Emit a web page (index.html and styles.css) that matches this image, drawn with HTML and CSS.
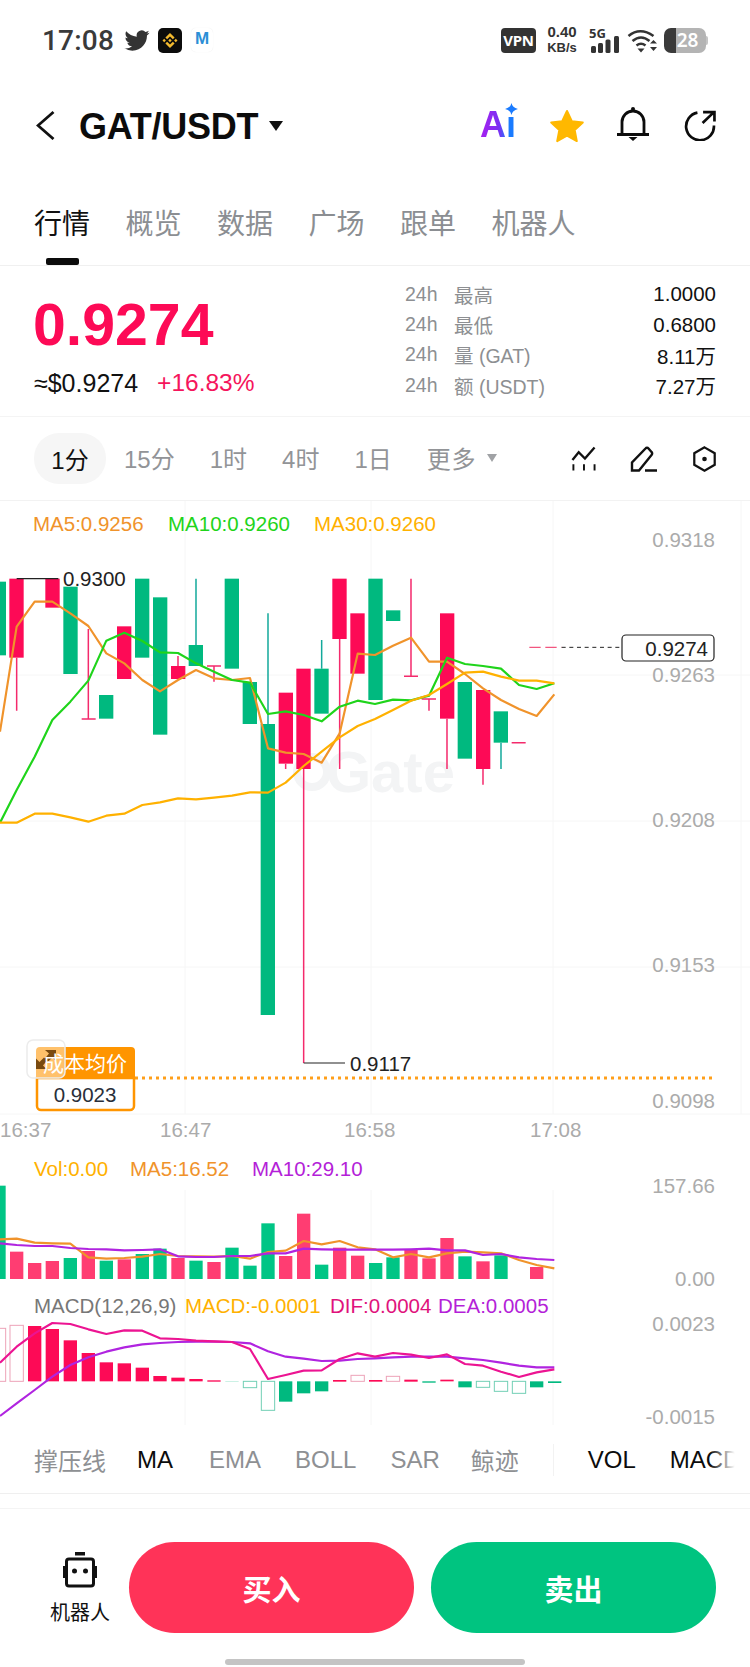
FILE: index.html
```html
<!DOCTYPE html>
<html lang="zh">
<head>
<meta charset="utf-8">
<title>GAT/USDT</title>
<link rel="stylesheet" href="styles.css">
</head>
<body>
<div class="page">
  <div class="status">
    <span class="clock">17:08</span>
    <svg class="st-bird" viewBox="0 0 24 24"><path d="M23.953 4.57a10 10 0 01-2.825.775 4.958 4.958 0 002.163-2.723c-.951.555-2.005.959-3.127 1.184a4.92 4.92 0 00-8.384 4.482C7.69 8.095 4.067 6.13 1.64 3.162a4.822 4.822 0 00-.666 2.475c0 1.71.87 3.213 2.188 4.096a4.904 4.904 0 01-2.228-.616v.06a4.923 4.923 0 003.946 4.827 4.996 4.996 0 01-2.212.085 4.936 4.936 0 004.604 3.417 9.867 9.867 0 01-6.102 2.105c-.39 0-.779-.023-1.17-.067a13.995 13.995 0 007.557 2.209c9.053 0 13.998-7.496 13.998-13.985 0-.21 0-.42-.015-.63A9.935 9.935 0 0024 4.59z"/></svg>
    <svg class="st-bn" viewBox="0 0 24 25"><rect class="bn-bg" width="24" height="25" rx="5"/><g transform="translate(4.5 5) scale(.625)"><path class="bn-fg" d="M16.624 13.9202l2.7175 2.7154-7.353 7.353-7.353-7.352 2.7175-2.7164 4.6355 4.6595 4.6356-4.6595zm4.6366-4.6366L24 12l-2.7154 2.7164L18.5682 12l2.6924-2.7164zm-9.272.001l2.7163 2.6914-2.7164 2.7174v-.001L9.2721 12l2.7164-2.7154zm-9.2722-.001L5.4088 12l-2.6914 2.6924L0 12l2.7164-2.7164zM11.9885.0115l7.353 7.329-2.7174 2.7154-4.6356-4.6356-4.6355 4.6595-2.7174-2.7154 7.353-7.353z"/></g></svg>
    <span class="st-m">M</span>
    <div class="st-right">
      <span class="vpn">VPN</span>
      <span class="speed"><b>0.40</b><b class="kbs">KB/s</b></span>
      <span class="net"><b class="fiveg">5G</b>
        <svg class="bars" viewBox="0 0 28 17"><rect x="0" y="10" width="5" height="7" rx="1.5"/><rect x="7" y="7" width="5" height="10" rx="1.5"/><rect x="14.500" y="3.500" width="5" height="13.500" rx="1.500"/><rect x="23" y="0" width="5" height="17" rx="1.500"/></svg>
      </span>
      <svg class="wifi" viewBox="0 0 31 25"><path class="wf" d="M1.500 8Q13 -1.500 26.500 8"/><path class="wf" d="M5.500 13Q14 6 22.500 13"/><path class="wf" d="M9.500 17.500Q14 14 18.500 17.500"/><path class="wf-fill" d="M10.500 20.500h7l-3.500 4zM23 15.500l3.500-3.500 3.500 3.500zM23 19h7l-3.500 4z"/></svg>
      <span class="batt">28</span>
    </div>
  </div>

  <header class="head">
    <svg class="back" viewBox="0 0 20 30"><path d="M17.500 2L2 15.500 17.500 29"/></svg>
    <h1 class="pair">GAT/USDT</h1>
    <span class="caret"></span>
    <div class="head-icons">
      <span class="ai"><span class="ai-text">Aı</span>
        <svg class="spark" viewBox="0 0 14 13"><path d="M7 0Q7.800 5 14 6.500 7.800 8 7 13 6.200 8 0 6.500 6.200 5 7 0z"/></svg>
      </span>
      <svg class="star" viewBox="0 0 36 35"><path d="M18 3l4.800 10.200 11 1.300-8.100 7.600 2.100 11L18 27.700 8.200 33.100l2.100-11L2.200 14.500l11-1.300z"/></svg>
      <svg class="bell" viewBox="0 0 32 36"><circle class="bell-dot" cx="16" cy="2" r="2"/><path class="bell-l" d="M5 27V15a11 11 0 0 1 22 0v12M0 27.500h32"/><path class="bell-dot" d="M11.500 30h9L16 34z"/></svg>
      <svg class="share" viewBox="0 0 31 31"><path d="M13 3.500A13.500 13.500 0 1 0 29 16M18 13.500L29 3M18.500 3H29.500V12"/></svg>
    </div>
  </header>

  <nav class="tabs">
    <a class="tab on">行情</a><a class="tab">概览</a><a class="tab">数据</a><a class="tab">广场</a><a class="tab">跟单</a><a class="tab">机器人</a>
  </nav>

  <section class="ticker">
    <div class="tk-left">
      <div class="price">0.9274</div>
      <div class="sub"><span>≈$0.9274</span><span class="chg">+16.83%</span></div>
    </div>
    <div class="stats">
      <div class="st-row"><span class="st-h">24h</span><span class="st-k">最高</span><span class="st-v">1.0000</span></div>
      <div class="st-row"><span class="st-h">24h</span><span class="st-k">最低</span><span class="st-v">0.6800</span></div>
      <div class="st-row"><span class="st-h">24h</span><span class="st-k">量 (GAT)</span><span class="st-v">8.11万</span></div>
      <div class="st-row"><span class="st-h">24h</span><span class="st-k">额 (USDT)</span><span class="st-v">7.27万</span></div>
    </div>
  </section>

  <div class="tf">
    <span class="tf-i on">1分</span><span class="tf-i">15分</span><span class="tf-i">1时</span><span class="tf-i">4时</span><span class="tf-i">1日</span><span class="tf-i more">更多<i class="tf-caret"></i></span>
    <div class="tf-tools">
      <svg class="tool" viewBox="0 0 26 26"><path d="M1.500 14L8 6l6.500 6.500L24.500 1"/><path class="tool-b" d="M2.500 18.500V25M13.500 18.500V25M24.500 18.500V25"/></svg>
      <svg class="tool t-pen" viewBox="0 0 28 26"><path d="M2 24.500v-8L15.500 2.500a2 2 0 0 1 3 0l3 3.500a2 2 0 0 1 0 3L9 24.500zM15 24.500h12"/></svg>
      <svg class="tool" viewBox="0 0 26 28"><path d="M13 1.500l11 6.300v12.400l-11 6.300-11-6.300V7.800z"/><circle class="tool-dot" cx="13" cy="14" r="2.500"/></svg>
    </div>
  </div>

  <svg class="chart" viewBox="0 501 750 925">
    <g class="grid">
      <path d="M0 675H750M0 821H750M0 967H750M0 1114H750M185 501V1114M371 501V1114M553 501V1114M741 501V1114M185 1190V1425M371 1190V1425M553 1190V1425"/>
    </g>
    <circle class="wm-c" cx="312" cy="772" r="15"/>
    <text class="wm" x="326" y="792">Gate</text>

    <g transform="translate(0 530) scale(.33333)">
      <g class="c-g">
        <rect x="-25" y="155" width="43" height="221"/><rect x="190" y="170" width="43" height="262"/><rect x="297" y="495" width="43" height="71"/><rect x="405" y="146" width="43" height="237"/><rect x="459" y="202" width="43" height="412"/><rect x="566" y="345" width="43" height="63"/><rect x="674" y="146" width="43" height="270"/><rect x="728" y="456" width="43" height="126"/><rect x="782" y="582" width="43" height="873"/><rect x="943" y="416" width="43" height="135"/><rect x="1105" y="146" width="43" height="364"/><rect x="1158" y="241" width="43" height="32"/><rect x="1373" y="456" width="43" height="230"/><rect x="1481" y="544" width="43" height="94"/>
      </g>
      <path class="w-g" d="M588 146V345M804 250V582M965 330V416M1503 638V717"/>
      <g class="c-r">
        <rect x="28" y="146" width="43" height="237"/><rect x="136" y="146" width="43" height="87"/><rect x="351" y="289" width="43" height="158"/><rect x="513" y="408" width="43" height="39"/><rect x="836" y="488" width="43" height="213"/><rect x="889" y="416" width="43" height="301"/><rect x="997" y="146" width="43" height="181"/><rect x="1051" y="250" width="43" height="181"/><rect x="1320" y="250" width="43" height="316"/><rect x="1428" y="480" width="43" height="237"/>
      </g>
      <path class="w-r" d="M50 383V542M265 297V567M245 567H287M534 378V408M621 408H663M642 408V455M857 701V717M911 717V1599M1019 327V717M1233 146V439M1212 439H1254M1265 507H1308M1287 507V542M1341 566V717M1449 717V764M1535 638H1577"/>
      <path class="w-k" d="M50 146H175M911 1599H1035"/>
      <polyline class="l-o" points="0,605 50,290 104,215 157,215 211,250 265,288 319,370 373,400 427,450 480,484 534,450 588,420 642,445 696,450 750,444 804,655 857,668 911,672 965,698 1019,610 1073,371 1125,375 1179,347 1233,323 1287,395 1341,395 1395,432 1449,475 1503,510 1557,537 1610,558 1663,493"/>
      <polyline class="l-g" points="0,878 50,780 104,680 157,570 211,515 265,452 319,332 373,308 427,333 480,367 534,369 588,400 642,425 696,450 750,458 804,552 857,544 911,555 965,574 1019,530 1073,512 1125,522 1179,509 1233,511 1287,497 1341,383 1395,402 1449,408 1503,416 1557,465 1610,477 1663,460"/>
      <polyline class="l-y" points="0,878 50,878 104,851 157,851 211,862 265,875 319,857 373,851 427,825 480,817 534,805 588,808 642,803 696,797 750,787 804,788 857,758 911,708 965,665 1019,622 1073,588 1125,567 1179,540 1233,512 1287,495 1341,462 1395,428 1449,425 1503,440 1557,452 1610,452 1663,460"/>
      <path class="dash-r" d="M1588 352H1685"/>
      <path class="dash-k" d="M1685 352H1865"/>
    </g>

    <g class="t-lab">
      <text class="t-o" x="33" y="531">MA5:0.9256</text>
      <text class="t-g" x="168" y="531">MA10:0.9260</text>
      <text class="t-y" x="314" y="531">MA30:0.9260</text>
      <text class="t-k" x="63" y="586">0.9300</text>
      <text class="t-k" x="350" y="1071">0.9117</text>
    </g>

    <g class="t-ax t-end">
      <text x="715" y="547">0.9318</text>
      <text x="715" y="682">0.9263</text>
      <text x="715" y="827">0.9208</text>
      <text x="715" y="972">0.9153</text>
      <text x="715" y="1108">0.9098</text>
      <text x="715" y="1193">157.66</text>
      <text x="715" y="1286">0.00</text>
      <text x="715" y="1331">0.0023</text>
      <text x="715" y="1424">-0.0015</text>
    </g>

    <rect class="pbox" x="622" y="635" width="92" height="26" rx="4"/>
    <text class="t-lab t-k t-end" x="708" y="656">0.9274</text>

    <path class="dots" d="M135 1078H716"/>
    <path class="tag-body" d="M37 1078H134V1106a4 4 0 0 1-4 4H41a4 4 0 0 1-4-4z"/>
    <path class="tag-head" d="M36 1078V1051a4 4 0 0 1 4-4H131a4 4 0 0 1 4 4V1078z"/>
    <rect class="exp" x="27" y="1040" width="38" height="38" rx="6"/>
    <path class="exp-a" d="M45 1050H56V1061L52.500 1057.500 47.500 1062 44.500 1059 49 1053.500zM46.500 1069H36V1058.500L39.500 1062 44 1057.500 47 1060.500 43 1065.500z"/>
    <text class="t-tag" x="85" y="1071">成本均价</text>
    <text class="t-cost" x="85" y="1102">0.9023</text>

    <g class="t-ax">
      <text x="0" y="1137">16:37</text>
      <text x="160" y="1137">16:47</text>
      <text x="344" y="1137">16:58</text>
      <text x="530" y="1137">17:08</text>
    </g>

    <g class="t-lab">
      <text class="t-y" x="34" y="1176">Vol:0.00</text>
      <text class="t-o" x="130" y="1176">MA5:16.52</text>
      <text class="t-p" x="252" y="1176">MA10:29.10</text>
      <text class="t-gr" x="34" y="1313">MACD(12,26,9)</text>
      <text class="t-y" x="185" y="1313">MACD:-0.0001</text>
      <text class="t-m" x="330" y="1313">DIF:0.0004</text>
      <text class="t-p" x="438" y="1313">DEA:0.0005</text>
    </g>

    <g transform="translate(0 1170) scale(.33333)">
      <g class="v-g">
        <rect x="-17" y="47" width="34" height="280"/><rect x="191" y="264" width="40" height="63"/><rect x="299" y="272" width="40" height="55"/><rect x="407" y="252" width="40" height="75"/><rect x="460" y="236" width="40" height="91"/><rect x="568" y="272" width="40" height="55"/><rect x="676" y="233" width="40" height="94"/><rect x="730" y="287" width="40" height="40"/><rect x="784" y="160" width="40" height="167"/><rect x="945" y="284" width="40" height="43"/><rect x="1107" y="279" width="40" height="48"/><rect x="1159" y="262" width="40" height="65"/><rect x="1375" y="259" width="40" height="68"/><rect x="1483" y="256" width="40" height="71"/>
      </g>
      <g class="v-r">
        <rect x="30" y="245" width="40" height="82"/><rect x="84" y="279" width="40" height="48"/><rect x="137" y="273" width="40" height="54"/><rect x="245" y="243" width="40" height="84"/><rect x="353" y="268" width="40" height="59"/><rect x="514" y="264" width="40" height="63"/><rect x="622" y="276" width="40" height="51"/><rect x="837" y="258" width="40" height="69"/><rect x="891" y="131" width="40" height="196"/><rect x="999" y="233" width="40" height="94"/><rect x="1053" y="257" width="40" height="70"/><rect x="1213" y="240" width="40" height="87"/><rect x="1267" y="265" width="40" height="62"/><rect x="1321" y="204" width="40" height="123"/><rect x="1429" y="274" width="40" height="53"/><rect x="1590" y="291" width="40" height="36"/>
      </g>
      <polyline class="l-o" points="0,208 50,206 104,218 157,220 211,221 265,262 319,266 373,264 427,260 480,252 534,258 588,259 642,260 696,258 750,266 804,246 857,242 911,213 965,223 1019,213 1073,232 1125,238 1179,262 1233,252 1287,262 1341,250 1395,245 1449,247 1503,250 1557,270 1610,285 1663,295"/>
      <polyline class="l-p" points="0,220 50,225 104,228 157,228 211,234 265,237 319,238 373,241 427,240 480,238 534,259 588,261 642,261 696,258 750,258 804,250 857,250 911,236 965,238 1019,239 1073,239 1125,239 1179,239 1233,238 1287,236 1341,241 1395,241 1449,255 1503,252 1557,262 1610,267 1663,270"/>

      <g class="m-h-r">
        <rect x="-18" y="475" width="35" height="159"/><rect x="30" y="466" width="40" height="168"/><rect x="1053" y="616" width="40" height="18"/><rect x="1159" y="619" width="40" height="15"/>
      </g>
      <g class="c-r">
        <rect x="84" y="468" width="40" height="166"/><rect x="137" y="477" width="40" height="157"/><rect x="191" y="511" width="40" height="123"/><rect x="245" y="549" width="40" height="85"/><rect x="299" y="577" width="40" height="57"/><rect x="353" y="580" width="40" height="54"/><rect x="407" y="593" width="40" height="41"/><rect x="460" y="618" width="40" height="16"/><rect x="514" y="623" width="40" height="11"/><rect x="568" y="627" width="40" height="7"/><rect x="622" y="631" width="40" height="4"/><rect x="999" y="630" width="40" height="5"/><rect x="1107" y="630" width="40" height="5"/><rect x="1213" y="629" width="40" height="6"/><rect x="1321" y="629" width="40" height="5"/>
      </g>
      <g class="m-h-g">
        <rect x="730" y="634" width="40" height="19"/><rect x="784" y="634" width="40" height="87"/><rect x="1429" y="634" width="40" height="18"/><rect x="1483" y="634" width="40" height="30"/><rect x="1537" y="634" width="40" height="36"/>
      </g>
      <g class="c-g">
        <rect x="676" y="633" width="40" height="2" class="m-faint"/><rect x="837" y="634" width="40" height="61"/><rect x="891" y="634" width="40" height="36"/><rect x="945" y="634" width="40" height="30"/><rect x="1267" y="634" width="40" height="4"/><rect x="1375" y="634" width="40" height="18"/><rect x="1590" y="634" width="40" height="18"/><rect x="1644" y="634" width="40" height="5"/>
      </g>
      <polyline class="l-p" points="0,738 50,700 104,660 157,620 211,585 265,562 319,545 373,532 427,523 480,519 534,516 588,515 642,515 696,516 750,520 804,544 857,560 911,566 965,573 1019,572 1073,567 1125,565 1179,562 1233,560 1287,560 1341,560 1395,565 1449,570 1503,578 1557,587 1610,592 1663,592"/>
      <polyline class="l-m" points="0,578 50,530 104,490 157,459 211,462 265,478 319,492 373,481 427,482 480,505 534,507 588,512 642,514 696,516 750,537 804,627 857,615 911,602 965,601 1019,567 1073,550 1125,560 1179,549 1233,554 1287,564 1341,553 1395,582 1449,587 1503,605 1557,621 1610,607 1663,598"/>
    </g>
  </svg>

  <div class="inds">
    <span class="ind first">撑压线</span><span class="ind dark d-ma">MA</span><span class="ind">EMA</span><span class="ind">BOLL</span><span class="ind i-sar">SAR</span><span class="ind">鲸迹</span><i class="ind-sep"></i><span class="ind dark">VOL</span><span class="ind dark">MACD</span>
  </div>
  <div class="band"></div>

  <footer class="foot">
    <div class="foot-row">
      <div class="bot">
        <svg class="bot-i" viewBox="0 0 36 36"><path class="bot-top" d="M13 0h10v3.500H13z"/><rect class="bot-s" x="4.500" y="7" width="27" height="27" rx="2.500"/><path class="bot-top" d="M1 14h3v12H1zM32 14h3v12h-3z"/><circle class="bot-top" cx="12.500" cy="19" r="2.500"/><circle class="bot-top" cx="23.500" cy="19" r="2.500"/></svg>
        <span class="bot-t">机器人</span>
      </div>
      <button class="cta buy">买入</button>
      <button class="cta sell">卖出</button>
    </div>
    <div class="home"></div>
  </footer>
</div>
</body>
</html>
```
FILE: styles.css
```css
* { box-sizing: border-box; }
html, body { margin: 0; padding: 0; background: #fff; }
body { font-family: "Liberation Sans", "Noto Sans CJK SC", sans-serif; color: #111; }
.page { width: 750px; height: 1667px; overflow: hidden; display: flex; flex-direction: column; }

/* status bar */
.status { height: 80px; display: flex; align-items: center; padding: 0 44px 0 42px; color: #333; font-family: "Noto Sans", sans-serif; }
.clock { font-family: Roboto, sans-serif; font-size: 28px; font-weight: 500; letter-spacing: .2px; width: 71px; margin-right: 11px; color: #3a3a3a; }
.st-bird { width: 26px; height: 25px; fill: #333; margin-right: 8px; }
.st-bn { width: 24px; height: 25px; margin-right: 9px; }
.bn-bg { fill: #0c0c0c; }
.bn-fg { fill: #f3ba2f; }
.st-m { width: 22px; height: 24px; border-radius: 5px; background: #fff; box-shadow: 0 0 1px #e6e6e6; color: #2b8fd6; font: 700 17px "Liberation Sans", sans-serif; display: flex; align-items: center; justify-content: center; padding-bottom: 3px; }
.st-right { margin-left: auto; display: flex; align-items: center; }
.vpn { width: 35px; height: 25px; background: #333; color: #fff; border-radius: 4px; font-size: 15px; font-weight: 700; display: flex; align-items: center; justify-content: center; letter-spacing: -.3px; margin-right: 10px; }
.speed { display: flex; flex-direction: column; align-items: center; width: 32px; font: 700 15px/16px "Liberation Sans", sans-serif; margin-right: 11px; }
.kbs { font-size: 13px; }
.net { position: relative; width: 30px; height: 25px; margin-right: 8px; }
.fiveg { position: absolute; left: 0; top: -2px; font-size: 13px; line-height: 14px; }
.bars { position: absolute; left: 2px; bottom: 0; width: 28px; height: 17px; fill: #333; }
.wifi { width: 31px; height: 25px; margin-right: 6px; }
.wf { fill: none; stroke: #333; stroke-width: 2.6; }
.wf-fill { fill: #333; }
.batt { position: relative; width: 42px; height: 25px; border-radius: 7px; background: linear-gradient(90deg, #3a3a3a 0 12px, #b4b4b4 12px); color: #fff; font-size: 19px; font-weight: 600; display: flex; align-items: center; justify-content: center; padding-left: 5px; }
.batt::after { content: ""; position: absolute; right: -2px; top: 8px; width: 2px; height: 9px; background: #c4c4c4; border-radius: 0 2px 2px 0; }

/* header */
.head { height: 90px; display: flex; align-items: center; padding: 0 34px 0 36px; }
.back { width: 20px; height: 30px; fill: none; stroke: #111; stroke-width: 2.8; margin-right: 23px; }
.pair { margin: 4px 0 0; font-size: 36px; font-weight: 700; letter-spacing: -.25px; color: #0c0c0c; line-height: 40px; }
.caret { width: 0; height: 0; border: 7.500px solid transparent; border-top: 10px solid #111; border-bottom: 0; margin: 2px 0 0 11px; }
.head-icons { margin-left: auto; display: flex; align-items: center; }
.ai { position: relative; width: 38px; height: 36px; display: block; margin-right: 31px; }
.ai-text { display: block; font-size: 36px; font-weight: 700; line-height: 36px; background: linear-gradient(90deg, #a81ff0 0%, #7a30f2 50%, #1a7bff 72%); -webkit-background-clip: text; background-clip: text; color: transparent; }
.spark { position: absolute; right: 0; top: -4px; width: 13px; height: 12px; fill: #1a7bff; }
.star { width: 36px; height: 35px; fill: #ffb800; stroke: #ffb800; stroke-width: 2; stroke-linejoin: round; margin-right: 32px; }
.bell { width: 32px; height: 36px; margin-right: 35px; }
.bell-l { fill: none; stroke: #0c0c0c; stroke-width: 2.8; }
.bell-dot { fill: #0c0c0c; }
.share { width: 32px; height: 32px; fill: none; stroke: #0c0c0c; stroke-width: 2.6; }

/* tabs */
.tabs { height: 96px; display: flex; gap: 35.500px; padding: 33px 0 0 34px; border-bottom: 1px solid #f0f0f0; }
.tab { position: relative; font-size: 28px; line-height: 44px; height: 44px; color: #8b8e92; }
.tab.on { color: #111; }
.tab.on::after { content: ""; position: absolute; left: 12px; top: 55px; width: 33px; height: 7px; border-radius: 2px; background: #0c0c0c; }

/* ticker */
.ticker { height: 151px; display: flex; justify-content: space-between; padding: 0 34px; border-bottom: 1px solid #f4f4f4; }
.tk-left { padding-top: 28px; }
.price { font-size: 59px; line-height: 62px; font-weight: 700; color: #fd0a56; margin-left: -1px; }
.sub { display: flex; align-items: center; gap: 19px; margin-top: 12px; font-size: 25px; line-height: 30px; color: #111; }
.chg { color: #f5155c; font-size: 24.500px; }
.stats { width: 311px; padding-top: 13px; display: flex; flex-direction: column; }
.st-row { display: flex; height: 30.400px; align-items: center; font-size: 19.500px; color: #8d8f92; }
.st-h { width: 49px; }
.st-k { flex: 1; }
.st-v { color: #111; font-size: 20.500px; }

/* timeframes */
.tf { height: 84px; display: flex; align-items: center; padding: 0 33px 0 34px; border-bottom: 1px solid #f2f2f2; font-size: 24px; color: #929497; }
.tf-i { height: 51px; display: flex; align-items: center; margin: -2px 35px 0 0; }
.tf-i.on { width: 72px; justify-content: center; background: #f6f6f6; border-radius: 25px; color: #111; margin: -1px 18px 0 0; }
.tf-i.more { margin-right: 0; letter-spacing: .6px; }
.tf-caret { width: 0; height: 0; border: 5.500px solid transparent; border-top: 8px solid #a0a2a5; border-bottom: 0; margin-left: 11px; }
.tf-tools { margin-left: auto; display: flex; gap: 34px; align-items: center; }
.tool { width: 25px; height: 26px; fill: none; stroke: #111; stroke-width: 2.4; }
.t-pen { width: 28px; }
.tool-b { stroke-width: 2; }
.tool-dot { fill: #111; stroke: none; }

/* chart */
.chart { display: block; width: 750px; height: 925px; flex: none; overflow: visible; }
.grid path { stroke: #f6f6f6; stroke-width: 1; fill: none; }
.wm { font: 700 58px "Liberation Sans", sans-serif; fill: #f3f4f5; }
.wm-c { fill: none; stroke: #f3f4f5; stroke-width: 8; }
.c-g { fill: #00b97f; }
.v-g { fill: #00c585; }
.c-r { fill: #fd0a56; }
.v-r { fill: #ff3d72; }
.m-faint { opacity: .3; }
.w-g { stroke: #13a99b; stroke-width: 4.500; fill: none; }
.w-r { stroke: #f42a6c; stroke-width: 4.500; fill: none; }
.w-k { stroke: #222; stroke-width: 3.500; fill: none; }
.l-o, .l-g, .l-y, .l-p, .l-m { fill: none; stroke-width: 6.500; stroke-linejoin: round; }
.l-o { stroke: #f0932b; }
.l-g { stroke: #1fd41b; }
.l-y { stroke: #ffb100; }
.l-p { stroke: #b024e0; }
.l-m { stroke: #ec1492; }
.m-h-r { fill: #fff; stroke: #eda3b8; stroke-width: 3; }
.m-h-g { fill: #fff; stroke: #72cfb5; stroke-width: 3; }
.dash-r { stroke: #f2567f; stroke-width: 4; stroke-dasharray: 34 14; fill: none; }
.dash-k { stroke: #222; stroke-width: 3; stroke-dasharray: 12 11; fill: none; }
.t-lab text, .t-lab { font-size: 20.500px; font-family: "Liberation Sans", sans-serif; }
.t-ax text { font-size: 20.500px; font-family: "Liberation Sans", sans-serif; fill: #ababab; }
.t-end, .t-end text { text-anchor: end; }
.t-o { fill: #f0932b; }
.t-g { fill: #1fd41b; }
.t-y { fill: #ffb100; }
.t-k { fill: #222; }
.t-p { fill: #b41fd8; }
.t-m { fill: #e0127c; }
.t-gr { fill: #777; }
.pbox { fill: #fff; stroke: #222; stroke-width: 1.200; }
.dots { stroke: #ff9f1a; stroke-width: 3; stroke-dasharray: 3 4; fill: none; }
.tag-head { fill: #ff9500; }
.tag-body { fill: #fff; stroke: #ff9500; stroke-width: 2.500; }
.exp { fill: rgba(255,255,255,.42); stroke: #ececec; stroke-width: 1.500; }
.exp-a { fill: #7a4a10; }
.t-tag { font: 21px "Noto Sans CJK SC", sans-serif; fill: #fff; text-anchor: middle; }
.t-cost { font: 20.500px "Liberation Sans", sans-serif; fill: #2a2f3a; text-anchor: middle; }

/* indicator row */
.inds { position: relative; height: 68px; display: flex; align-items: center; gap: 34px; padding: 0 0 0 34px; overflow: hidden; white-space: nowrap; border-bottom: 1px solid #efefef; font-size: 24px; color: #8e9093; flex: none; }
.ind { flex: none; }
.ind.first { margin-right: -3px; }
.ind.d-ma { margin-right: 2px; }
.ind.i-sar { margin-right: -3px; }
.ind.dark { color: #0c0c0c; }
.ind-sep { flex: none; width: 1px; height: 32px; background: #f2f2f2; margin: 0; }
.inds::after { content: ""; position: absolute; right: 0; top: 0; bottom: 0; width: 40px; background: linear-gradient(90deg, rgba(255,255,255,0), #fff 62%); }
.band { height: 15px; flex: none; background: #fff; border-bottom: 1px solid #f4f4f4; }

/* footer */
.foot { flex: 1; padding: 33px 34px 0; }
.foot-row { display: flex; align-items: flex-start; gap: 17px; height: 91px; }
.bot { flex: none; width: 80px; margin-right: -2px; height: 91px; display: flex; flex-direction: column; align-items: center; padding: 10px 0 0 12px; }
.bot-i { width: 36px; height: 36px; }
.bot-top { fill: #111; }
.bot-s { fill: #fff; stroke: #111; stroke-width: 3; }
.bot-t { font-size: 20px; line-height: 26px; margin-top: 12px; white-space: nowrap; color: #111; }
.cta { flex: 1 1 0; height: 91px; border: 0; border-radius: 46px; color: #fff; font: 700 29px "Noto Sans CJK SC", sans-serif; padding: 0; }
.buy { background: #ff3358; }
.sell { background: #00c480; }
.home { width: 300px; height: 6px; border-radius: 3px; background: #c4c4c4; margin: 26px 0 0 191px; }
```
